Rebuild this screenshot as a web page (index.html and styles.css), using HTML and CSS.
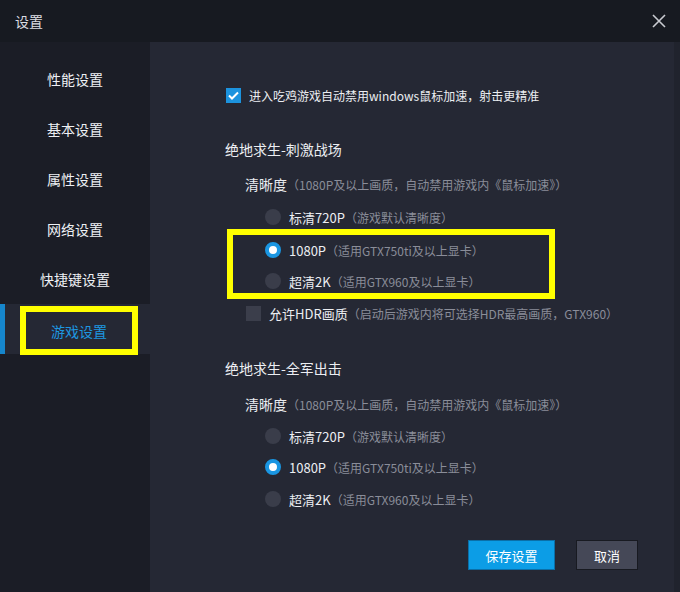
FILE: index.html
```html
<!DOCTYPE html>
<html lang="zh-CN">
<head>
    <meta charset="UTF-8">
    <title>设置</title>
    <link rel="stylesheet" href="styles.css">
</head>
<body>

    <div class="window">
        <header class="titlebar">
            <span class="title">设置</span>
            <button class="close-btn" aria-label="关闭">
                <svg width="14" height="14" viewBox="0 0 14 14">
                    <path d="M1 1 L13 13 M13 1 L1 13" stroke="#c9cbd1" stroke-width="1.6" fill="none"/>
                </svg>
            </button>
        </header>

        <div class="main">
            <!-- Seitenmenü -->
            <nav class="sidebar">
                <div class="nav-item">性能设置</div>
                <div class="nav-item">基本设置</div>
                <div class="nav-item">属性设置</div>
                <div class="nav-item">网络设置</div>
                <div class="nav-item">快捷键设置</div>
                <div class="nav-item active"><span class="mark-box">游戏设置</span></div>
            </nav>

            <!-- Inhalt -->
            <section class="content">
                <div class="check-row first">
                    <span class="checkbox checked">
                        <svg width="11" height="9" viewBox="0 0 11 9">
                            <path d="M1 4.5 L4 7.5 L10 1.5" stroke="#fff" stroke-width="2" fill="none"/>
                        </svg>
                    </span>
                    <span class="label small">进入吃鸡游戏自动禁用windows鼠标加速，射击更精准</span>
                </div>

                <h3 class="section-title">绝地求生-刺激战场</h3>
                <div class="option-title">清晰度<span class="hint">（1080P及以上画质，自动禁用游戏内《鼠标加速》）</span></div>

                <div class="radio-row first-radio">
                    <span class="radio"></span>
                    <span class="label">标清720P<span class="hint">（游戏默认清晰度）</span></span>
                </div>
                <div class="mark-group">
                    <div class="radio-row">
                        <span class="radio checked"></span>
                        <span class="label">1080P<span class="hint">（适用GTX750ti及以上显卡）</span></span>
                    </div>
                    <div class="radio-row next">
                        <span class="radio"></span>
                        <span class="label">超清2K<span class="hint">（适用GTX960及以上显卡）</span></span>
                    </div>
                </div>

                <div class="check-row hdr">
                    <span class="checkbox"></span>
                    <span class="label">允许HDR画质<span class="hint">（启动后游戏内将可选择HDR最高画质，GTX960）</span></span>
                </div>

                <h3 class="section-title second">绝地求生-全军出击</h3>
                <div class="option-title second">清晰度<span class="hint">（1080P及以上画质，自动禁用游戏内《鼠标加速》）</span></div>

                <div class="radio-row list">
                    <span class="radio"></span>
                    <span class="label">标清720P<span class="hint">（游戏默认清晰度）</span></span>
                </div>
                <div class="radio-row list">
                    <span class="radio checked"></span>
                    <span class="label">1080P<span class="hint">（适用GTX750ti及以上显卡）</span></span>
                </div>
                <div class="radio-row list last">
                    <span class="radio"></span>
                    <span class="label">超清2K<span class="hint">（适用GTX960及以上显卡）</span></span>
                </div>

                <div class="buttons">
                    <button class="save-button">保存设置</button>
                    <button class="cancel-button">取消</button>
                </div>
            </section>
        </div>
    </div>

</body>
</html>
```

FILE: styles.css
```css
body {
    margin: 0;
    padding: 0;
    background: #171a21;
    font-family: "Noto Sans CJK SC", "Noto Sans", sans-serif;
    color: #eceef2;
}

.window {
    width: 680px;
    height: 592px;
    display: flex;
    flex-direction: column;
    overflow: hidden;
}

.titlebar {
    height: 42px;
    background: #171a21;
    display: flex;
    align-items: center;
    justify-content: space-between;
    padding: 0 14px 0 15px;
}

.title {
    font-size: 14px;
    color: #dcdee3;
}

.close-btn {
    background: none;
    border: none;
    padding: 0;
    width: 14px;
    height: 14px;
    display: flex;
    cursor: pointer;
}

.main {
    flex: 1;
    display: flex;
}

.sidebar {
    width: 150px;
    background: #1b1d26;
    padding-top: 12px;
}

.nav-item {
    height: 50px;
    display: flex;
    align-items: center;
    justify-content: center;
    font-size: 14px;
    color: #eef0f4;
}

.nav-item.active {
    background: #252834;
    border-left: 5px solid #1686cc;
    justify-content: flex-start;
    padding-left: 15px;
    color: #1d97e0;
}

.mark-box {
    width: 106px;
    height: 37px;
    margin-top: 3px;
    border: 6px solid #ffff00;
    display: flex;
    align-items: center;
    justify-content: center;
}

.content {
    flex: 1;
    background: #252834;
    border-right: 6px solid #20232d;
    font-size: 13px;
}

.check-row,
.radio-row {
    display: flex;
    align-items: center;
    height: 20px;
}

.check-row.first {
    margin: 43px 0 0 76px;
}

.check-row.hdr {
    margin: 4px 0 0 96px;
}

.checkbox {
    width: 15px;
    height: 15px;
    background: #3b3e4b;
    margin-right: 8px;
    display: flex;
    align-items: center;
    justify-content: center;
}

.checkbox.checked {
    background: #1c93de;
}

.label {
    white-space: nowrap;
}

.label.small {
    font-size: 12px;
}

.hint {
    font-size: 12px;
    color: #8a8d99;
}

.section-title {
    margin: 34px 0 0 75px;
    font-size: 14px;
    font-weight: normal;
    line-height: 20px;
}

.section-title.second {
    margin-top: 35px;
}

.option-title {
    margin: 15px 0 0 95px;
    font-size: 14px;
    line-height: 20px;
}

.option-title.second {
    margin-top: 16px;
}

.radio-row {
    margin-left: 115px;
}

.radio-row.first-radio {
    margin-top: 12px;
}

.radio {
    width: 16px;
    height: 16px;
    border-radius: 50%;
    background: #3a3d4a;
    margin-right: 8px;
    box-sizing: border-box;
}

.radio.checked {
    background: #fff;
    border: 4px solid #1a96e2;
}

.mark-group {
    margin: 2px 0 0 77px;
    width: 316px;
    border: 6px solid #ffff00;
    padding: 5px 0 2px 0;
}

.mark-group .radio-row {
    margin-left: 32px;
}

.mark-group .radio-row.next {
    margin-top: 11px;
}

.radio-row.list {
    margin-top: 11px;
}

.radio-row.list.last {
    margin-top: 12px;
}

.buttons {
    display: flex;
    justify-content: flex-end;
    gap: 21px;
    margin-top: 31px;
    padding-right: 36px;
}

.save-button,
.cancel-button {
    height: 30px;
    font-family: inherit;
    font-size: 13px;
    color: #fff;
    cursor: pointer;
}

.save-button {
    width: 87px;
    background: #0c9de6;
    border: 1px solid #0a6fa8;
}

.cancel-button {
    width: 62px;
    background: #454857;
    border: 1px solid #181a21;
}
```
